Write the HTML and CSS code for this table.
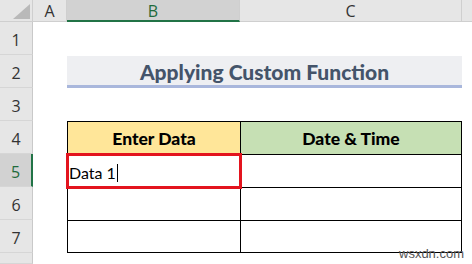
FILE: index.html
```html
<!DOCTYPE html>
<html>
<head>
<meta charset="utf-8">
<link rel="stylesheet" href="styles.css">
</head>
<body>
<div class="sheet">
  <div class="hd corner"><svg class="tri" width="17" height="15" viewBox="0 0 17 15"><polygon points="17,0 17,15 0,15" fill="#b9b9b9"/></svg></div>
  <div class="hd col">A</div>
  <div class="hd col sel-col">B</div>
  <div class="hd col">C</div>
  <div class="hd col last"></div>

  <div class="hd row">1</div><div class="blank span4"></div>
  <div class="hd row">2</div><div class="blank"></div><div class="title">Applying Custom Function</div><div class="blank"></div>
  <div class="hd row">3</div><div class="blank span4"></div>
  <div class="hd row">4</div><div class="blank"></div><div class="cell b th yellow">Enter Data</div><div class="cell c th green">Date &amp; Time</div><div class="blank"></div>
  <div class="hd row sel-row">5</div><div class="blank"></div><div class="cell b active"><span class="val">Data 1</span><span class="caret"></span></div><div class="cell c"></div><div class="blank"></div>
  <div class="hd row">6</div><div class="blank"></div><div class="cell b"></div><div class="cell c"></div><div class="blank"></div>
  <div class="hd row">7</div><div class="blank"></div><div class="cell b bottom"></div><div class="cell c bottom"></div><div class="blank"></div>
  <div class="hd row"></div><div class="blank span4"></div>
  <div class="mark">wsxdn.com</div>
</div>
</body>
</html>
```

FILE: styles.css
```css
* { box-sizing: border-box; }
html, body { margin: 0; padding: 0; background: #fff; }
body { width: 472px; height: 264px; overflow: hidden; }

.sheet {
  position: relative;
  display: grid;
  grid-template-columns: 33px 34px 173px 222px 10px;
  grid-template-rows: 22px repeat(7, 33px) 11px;
  font-family: Lato, "Liberation Sans", sans-serif;
}

.hd {
  background: #e6e6e6;
  color: #333;
  font-family: "Open Sans", "Liberation Sans", sans-serif;
  font-size: 16px;
  display: flex;
  align-items: center;
  justify-content: center;
  border-right: 1px solid #cfcfcf;
  border-bottom: 1px solid #cfcfcf;
}
.corner { position: relative; align-items: flex-end; justify-content: flex-end; padding: 0 2px 2px 0; }
.col { padding-top: 1px; }
.col.last { border-right: none; }
.row { align-items: center; padding-top: 4px; border-right: 1px solid #c9c9c9; border-bottom: 1px solid #d6d6d6; }
.sel-col { background: #d2d2d2; color: #1f6b3c; border-bottom: 2px solid #217346; }
.sel-row { background: #d2d2d2; color: #1f6b3c; border-right: 2px solid #217346; }

.blank { background: #fff; }
.span4 { grid-column: span 4; }

.title {
  grid-column: span 2;
  background: #eeeff2;
  border-bottom: 3px solid #a9b7dc;
  color: #44546a;
  font-weight: 900;
  font-size: 21px;
  display: flex;
  align-items: center;
  justify-content: center;
  padding: 2px 0 0 0;
  margin-top: 1px;
}

.cell {
  border-left: 1px solid #000;
  border-top: 1px solid #000;
  display: flex;
  align-items: center;
  font-size: 16px;
  color: #000;
}
.cell.c { border-right: 1px solid #000; }
.cell.bottom { border-bottom: 1px solid #000; }
.th { justify-content: center; font-weight: 900; font-size: 17.5px; padding-top: 1px; }
.yellow { background: #ffe699; }
.green { background: #c6e0b4; }

.active { position: relative; padding-left: 1px; padding-top: 3px; }
.active::after {
  content: "";
  position: absolute;
  left: -2px; top: -2px; right: -2px; bottom: -2px;
  border: 3px solid #e3141e;
}
.caret { display: inline-block; width: 1px; height: 18px; background: #000; margin-left: 1px; }

.mark {
  position: absolute;
  left: 399px;
  top: 246px;
  font-family: "Liberation Sans", sans-serif;
  font-size: 13px;
  color: #555;
}
```
